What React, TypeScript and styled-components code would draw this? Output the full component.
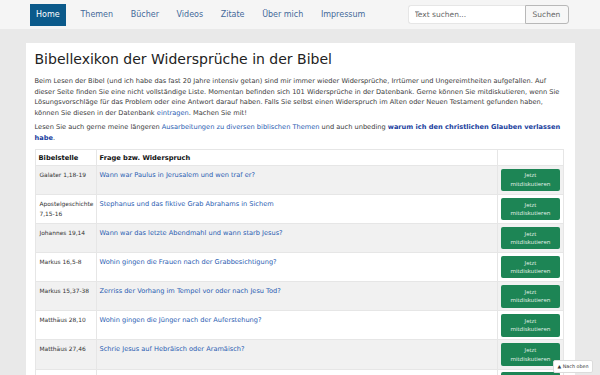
import React from "react";
import styled, { createGlobalStyle } from "styled-components";

const GlobalStyle = createGlobalStyle`
  html, body {
    margin: 0;
    padding: 0;
    background: #e9e9e9;
    font-family: "DejaVu Sans", Verdana, sans-serif;
    color: #333;
  }
`;

const rows = [
  { ref: "Galater 1,18-19", q: "Wann war Paulus in Jerusalem und wen traf er?" },
  { ref: "Apostelgeschichte 7,15-16", q: "Stephanus und das fiktive Grab Abrahams in Sichem" },
  { ref: "Johannes 19,14", q: "Wann war das letzte Abendmahl und wann starb Jesus?" },
  { ref: "Markus 16,5-8", q: "Wohin gingen die Frauen nach der Grabbesichtigung?" },
  { ref: "Markus 15,37-38", q: "Zerriss der Vorhang im Tempel vor oder nach Jesu Tod?" },
  { ref: "Matthäus 28,10", q: "Wohin gingen die Jünger nach der Auferstehung?" },
  { ref: "Matthäus 27,46", q: "Schrie Jesus auf Hebräisch oder Aramäisch?" },
  { ref: "Matthäus 9,18", q: "Lebte Jairus Tochter noch, oder war sie bereits tot?" },
];

const navItems = ["Themen", "Bücher", "Videos", "Zitate", "Über mich", "Impressum"];

const App = () => {
  return (
    <>
      <GlobalStyle />
      <NavBar>
        <NavInner>
          <NavLinks>
            <NavLink $active>Home</NavLink>
            {navItems.map((n) => (
              <NavLink key={n}>{n}</NavLink>
            ))}
          </NavLinks>
          <SearchForm>
            <SearchInput placeholder="Text suchen..." />
            <SearchButton>Suchen</SearchButton>
          </SearchForm>
        </NavInner>
      </NavBar>

      <Main>
        <Title>Bibellexikon der Widersprüche in der Bibel</Title>
        <Intro>
          Beim Lesen der Bibel (und ich habe das fast 20 Jahre intensiv getan) sind mir immer
          wieder Widersprüche, Irrtümer und Ungereimtheiten aufgefallen. Auf dieser Seite finden
          Sie eine nicht vollständige Liste. Momentan befinden sich 101 Widersprüche in der
          Datenbank. Gerne können Sie mitdiskutieren, wenn Sie Lösungsvorschläge für das Problem
          oder eine Antwort darauf haben. Falls Sie selbst einen Widerspruch im Alten oder Neuen
          Testament gefunden haben, können Sie diesen in der Datenbank <Link>eintragen</Link>.
          Machen Sie mit!
        </Intro>
        <Intro>
          Lesen Sie auch gerne meine längeren{" "}
          <Link>Ausarbeitungen zu diversen biblischen Themen</Link> und auch unbeding{" "}
          <StrongLink>warum ich den christlichen Glauben verlassen habe</StrongLink>.
        </Intro>

        <Table>
          <colgroup>
            <col style={{ width: 61 }} />
            <col />
            <col style={{ width: 66 }} />
          </colgroup>
          <thead>
            <tr>
              <Th>Bibelstelle</Th>
              <Th>Frage bzw. Widerspruch</Th>
              <Th />
            </tr>
          </thead>
          <tbody>
            {rows.map((r, i) => (
              <Row key={r.ref} $striped={i % 2 === 0}>
                <RefCell>{r.ref}</RefCell>
                <QuestionCell>
                  <Link>{r.q}</Link>
                </QuestionCell>
                <ActionCell>
                  <DiscussButton>
                    Jetzt
                    <br />
                    mitdiskutieren
                  </DiscussButton>
                </ActionCell>
              </Row>
            ))}
          </tbody>
        </Table>
      </Main>

      <BackToTop>▲ Nach oben</BackToTop>
    </>
  );
};

const NavBar = styled.nav`
  background: #f5f5f5;
  height: 29px;
`;

const NavInner = styled.div`
  width: 549px;
  margin: 0 auto;
  height: 100%;
  display: flex;
  align-items: center;
  justify-content: space-between;
  padding: 0 6px 0 4px;
  box-sizing: border-box;
`;

const NavLinks = styled.div`
  display: flex;
  align-items: center;
  gap: 1px;
`;

const NavLink = styled.a<{ $active?: boolean }>`
  display: flex;
  align-items: center;
  height: 22px;
  padding: 0 ${(p) => (p.$active ? "6.5px" : "8.3px")};
  font-size: 8px;
  color: ${(p) => (p.$active ? "#ffffff" : "#44699a")};
  background: ${(p) => (p.$active ? "#0b5a8b" : "transparent")};
  margin-right: ${(p) => (p.$active ? "5px" : "0")};
`;

const SearchForm = styled.div`
  display: flex;
  height: 19px;
`;

const SearchInput = styled.input`
  width: 117px;
  box-sizing: border-box;
  border: 1px solid #e6e6e6;
  border-right: none;
  border-radius: 3px 0 0 3px;
  background: #fff;
  padding: 0 6px;
  font-family: "DejaVu Sans", sans-serif;
  font-size: 7.5px;
  outline: none;
  &::placeholder {
    color: #666;
  }
`;

const SearchButton = styled.button`
  width: 44px;
  border: 1px solid #b8b8b8;
  border-radius: 0 3px 3px 0;
  background: #f7f7f7;
  color: #666;
  font-family: "DejaVu Sans", sans-serif;
  font-size: 7.5px;
  padding: 0;
`;

const Main = styled.main`
  width: 549px;
  margin: 14px auto 0;
  background: #fff;
  padding: 6px 10px 0 9px;
  box-sizing: border-box;
  height: 340px;
  overflow: hidden;
`;

const Title = styled.h1`
  margin: 0 0 6px;
  font-size: 14px;
  font-weight: normal;
  color: #222;
  line-height: 21px;
`;

const Intro = styled.p`
  margin: 0 0 4px;
  font-size: 6.64px;
  line-height: 10.5px;
  color: #3a3a3a;
`;

const Link = styled.a`
  color: #2a5db2;
`;

const StrongLink = styled.a`
  color: #1b3f9e;
  font-weight: bold;
`;

const Table = styled.table`
  margin-top: 6px;
  width: 529px;
  table-layout: fixed;
  border-collapse: collapse;
  border: 1px solid #e6e6e6;
`;

const Th = styled.th`
  text-align: left;
  font-size: 6.7px;
  font-weight: bold;
  color: #111;
  padding: 2.5px 3px;
  line-height: 10px;
  border: 1px solid #e6e6e6;
  vertical-align: middle;
`;

const Row = styled.tr<{ $striped: boolean }>`
  background: ${(p) => (p.$striped ? "#f1f1f1" : "#ffffff")};
`;

const Td = styled.td`
  border: 1px solid #e6e6e6;
  padding: 2.85px 3px;
  vertical-align: top;
`;

const RefCell = styled(Td)`
  font-size: 5.9px;
  line-height: 10px;
  color: #333;
  padding-left: 4px;
  padding-top: 3.5px;
`;

const QuestionCell = styled(Td)`
  font-size: 6.6px;
  line-height: 10px;
  padding-top: 3.5px;
`;

const ActionCell = styled(Td)`
  padding-left: 3.5px;
`;

const DiscussButton = styled.button`
  display: block;
  width: 59px;
  height: 22.4px;
  padding: 0;
  border: none;
  border-radius: 2px;
  background: #1d8555;
  color: #e4f2ea;
  font-family: "Open Sans", "DejaVu Sans", sans-serif;
  font-size: 5.9px;
  line-height: 8.6px;
`;

const BackToTop = styled.div`
  position: fixed;
  right: 7px;
  bottom: 2px;
  width: 40px;
  height: 13px;
  box-sizing: border-box;
  background: #fff;
  border: 1px solid #dcdcdc;
  border-radius: 2px;
  font-size: 4.8px;
  color: #333;
  display: flex;
  align-items: center;
  justify-content: center;
`;

export default App;
